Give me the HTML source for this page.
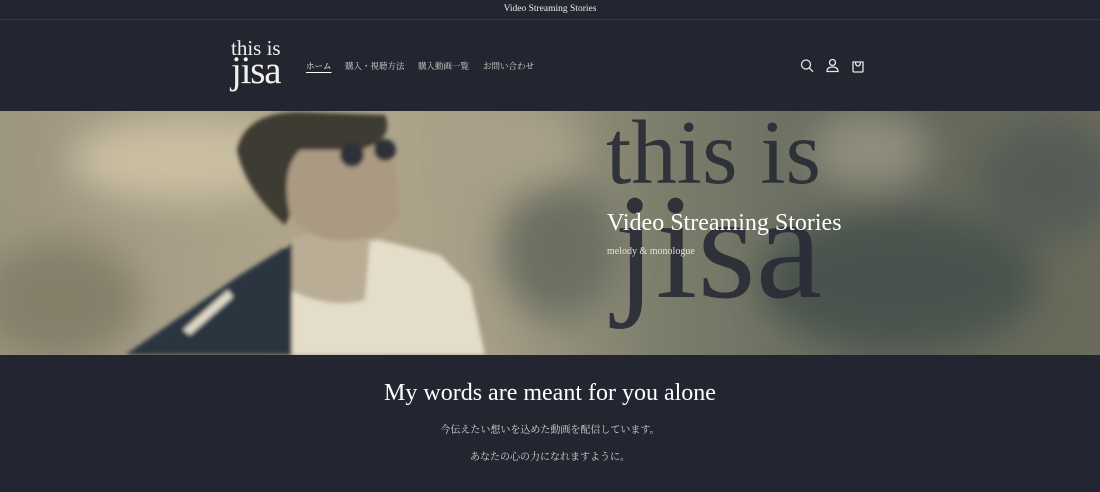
<!DOCTYPE html>
<html><head><meta charset="utf-8"><style>
*{margin:0;padding:0;box-sizing:border-box}
body{width:1100px;height:492px;background:#232631;font-family:"Liberation Serif","Noto Serif CJK SC",serif;color:#e8e6e0;overflow:hidden;position:relative}
.ann{height:20px;border-bottom:1px solid #353846;text-align:center;font-size:9.5px;line-height:18px;color:#f0eee8}
.hdr{height:91px;position:relative}
.logo{position:absolute;left:231px;top:18px;color:#f2f0ea;line-height:1}
.logo .a{font-size:21px;display:block}
.logo .b{font-size:39px;display:block;margin-top:-8px;letter-spacing:-1.2px}
.nav span{position:absolute;top:40px;font-size:8.5px;font-family:"Liberation Serif","Noto Serif CJK JP",serif;color:#d6d4cf;white-space:nowrap}
.nav span.u{text-decoration:underline;text-underline-offset:3px;color:#fff}
.hero{position:absolute;top:111px;left:0;width:1100px;height:244px;overflow:hidden}
.big{position:absolute;color:#2a2c36;opacity:.92;font-family:"Liberation Serif",serif;line-height:1}
.t1{left:606px;top:-4px;font-size:91px}
.t2{left:614px;top:61px;font-size:150px}
.vs{position:absolute;left:607px;top:99px;font-size:24px;color:#fff}
.md{position:absolute;left:607px;top:135px;font-size:10px;color:#e6e2d8}
.sec{position:absolute;top:355px;width:1100px;text-align:center}
.sec h2{font-weight:normal;font-size:24px;margin-top:25px;color:#fff}
.sec p{font-size:10px;font-family:"Liberation Serif","Noto Serif CJK JP",serif;color:#d8d6d0}
</style></head><body>
<div class="ann">Video Streaming Stories</div>
<div class="hdr">
<div class="logo"><span class="a">this is</span><span class="b">jisa</span></div>
<div class="nav"><span class="u" style="left:306px">ホーム</span><span style="left:345px">購入・視聴方法</span><span style="left:418px">購入動画一覧</span><span style="left:483px">お問い合わせ</span></div>
</div>
<svg width="70" height="16" viewBox="0 0 70 16" fill="none" stroke="#e8e6e0" stroke-width="1.3" style="position:absolute;left:800px;top:58px">
<circle cx="6" cy="6.5" r="4.5"/><path d="M9.3 10 L13 13.8"/>
<circle cx="32.5" cy="4.5" r="3"/><path d="M27 13.5 Q27 9 32.5 9 Q38 9 38 13.5 Z"/>
<path d="M53 4 H63 V13 Q63 14 62 14 H54 Q53 14 53 13 Z M55.5 4 Q55.5 8 58 8 Q60.5 8 60.5 4"/>
</svg>
<div class="hero">
<svg width="1100" height="244" viewBox="0 111 1100 244" style="position:absolute;left:0;top:0">
<defs>
<linearGradient id="bg" x1="0" x2="1" y1="0" y2="0">
<stop offset="0" stop-color="#9c9580"/><stop offset=".3" stop-color="#b1a78d"/><stop offset=".45" stop-color="#a59d86"/><stop offset=".6" stop-color="#7c7e6c"/><stop offset=".8" stop-color="#62675b"/><stop offset="1" stop-color="#6a6b5a"/>
</linearGradient>
<filter id="bl"><feGaussianBlur stdDeviation="18"/></filter>
<filter id="b2"><feGaussianBlur stdDeviation="2"/></filter>
</defs>
<rect x="0" y="111" width="1100" height="244" fill="url(#bg)"/>
<g filter="url(#bl)">
<ellipse cx="180" cy="160" rx="110" ry="40" fill="#cbbfa2"/>
<ellipse cx="60" cy="300" rx="80" ry="60" fill="#857f6b"/>
<ellipse cx="560" cy="250" rx="60" ry="70" fill="#6c6f62"/>
<ellipse cx="900" cy="280" rx="140" ry="70" fill="#4a524d"/>
<ellipse cx="1050" cy="180" rx="70" ry="60" fill="#555c57"/>
<ellipse cx="870" cy="150" rx="60" ry="40" fill="#8f8d7c"/>
<ellipse cx="520" cy="150" rx="60" ry="40" fill="#a9a18a"/>
</g>
<g filter="url(#b2)">
<path d="M285 245 L380 240 L440 255 L470 285 L485 355 L285 355 Z" fill="#e4ddc9"/>
<path d="M290 240 Q330 225 370 240 L365 300 Q330 310 290 290 Z" fill="#b9ad95"/>
<path d="M125 355 L240 275 L292 243 L292 355 Z" fill="#2c3540"/>
<path d="M183 330 L228 290 L233 297 L190 335 Z" fill="#ddd8c8"/>
<path d="M270 150 Q300 130 360 140 L395 160 L400 215 Q380 245 330 240 Q290 230 285 200 Z" fill="#ab9a82"/>
<path d="M237 150 Q245 112 300 112 L385 115 Q395 140 360 150 L300 150 Q280 170 290 215 L285 225 Q245 190 237 150 Z" fill="#3e3a33"/>
<circle cx="352" cy="155" r="12" fill="#2e3338"/><circle cx="385" cy="150" r="11" fill="#2e3338"/>
</g>
</svg>
<div class="big t1">this is</div>
<div class="big t2">jisa</div>
<div class="vs">Video Streaming Stories</div>
<div class="md">melody &amp; monologue</div>
</div>
<div class="sec">
<h2>My words are meant for you alone</h2>
<p style="margin-top:14px">今伝えたい想いを込めた動画を配信しています。</p>
<p style="margin-top:12px">あなたの心の力になれますように。</p>
</div>
</body></html>
